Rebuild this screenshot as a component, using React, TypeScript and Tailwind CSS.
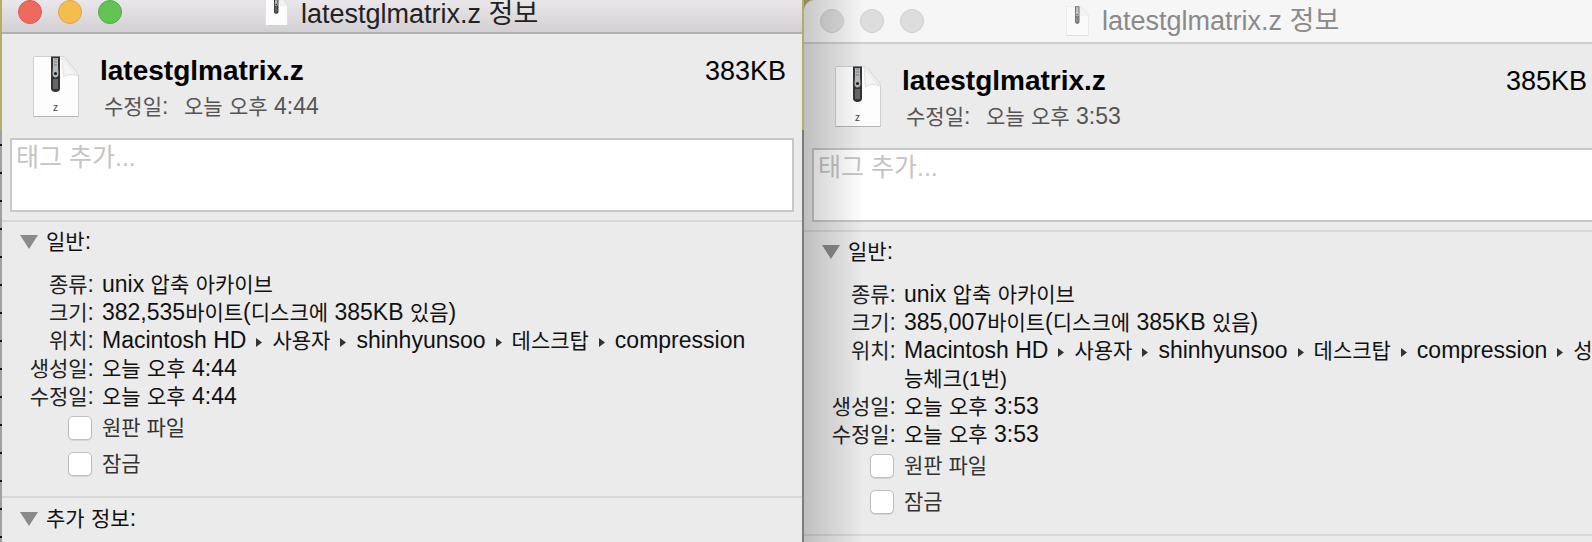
import React from "react";

const fontStack = "font-['Liberation_Sans','Noto_Sans_CJK_KR',sans-serif]";

// Latin runs sit bigger than hangul in the reference, so they get their own size
const Mixed: React.FC<{ text: string }> = ({ text }) => (
  <>
    {text.split(/([\x20-\x7e]+)/).map((part, i) =>
      i % 2 === 1 ? (
        <span key={i} className="text-[23px] leading-none">
          {part}
        </span>
      ) : (
        part
      ),
    )}
  </>
);

const ZipIcon: React.FC<{ className?: string; small?: boolean }> = ({ className, small }) => (
  <svg viewBox="0 0 46 61" className={className}>
    <path d="M1 0.5H28.5C30 0.5 31 1 32 2.2L43.5 16C45 17.8 45.5 19 45.5 21V60.5H0.5V1Z" fill="#fdfdfd" stroke="#d0d0d0" />
    <path d="M0.5 60.5H45.5" stroke="#b5b5b5" />
    <path d="M29 1.5L44.5 20C39 17.5 33 18.5 30.5 21C29.5 15 30 8 29 1.5Z" fill="#f4f4f4" stroke="#d8d8d8" strokeWidth="0.8" />
    <path d="M18 0.5H27V32.5C27 35 24.5 36 22.5 36C20.5 36 18 35 18 32.5Z" fill="#333333" />
    <path d="M20 2H25V11L25.5 18C25.5 20 24 21.5 22.5 21.5C21 21.5 19.5 20 19.5 18L20 11Z" fill="#b4babd" />
    <path d="M21 3H24M21 6H24M21 9H24" stroke="#6b6f72" strokeWidth="0.8" />
    <circle cx="22.5" cy="17.5" r="1.6" fill="#222222" />
    <path d="M20 24H25M20 26H25M20 28H25M20 30H25M20 32H25" stroke="#a8a8a8" strokeWidth="0.9" />
    {!small && (
      <text x="22.5" y="55" textAnchor="middle" fontSize="10" fill="#444" fontFamily="Liberation Sans">
        z
      </text>
    )}
  </svg>
);

const Disclosure: React.FC<{ label: string }> = ({ label }) => (
  <div className="flex items-center">
    <svg width="18" height="14" viewBox="0 0 18 14" className="ml-[18px] mr-[8px] shrink-0">
      <path d="M0 0H18L9 14Z" fill="#8a8a8a" />
    </svg>
    <span className="text-[21px] leading-[28px] text-[#111]">
      <Mixed text={label} />
    </span>
  </div>
);

const Row: React.FC<{ label: string; children: React.ReactNode }> = ({ label, children }) => (
  <div className="flex">
    <div className="w-[92px] shrink-0 text-right text-[21px] leading-[28px] text-[#222] whitespace-nowrap">
      <Mixed text={`${label}:`} />
    </div>
    <div className="ml-[8px] text-[21px] leading-[28px] text-[#111] whitespace-nowrap">{children}</div>
  </div>
);

const Check: React.FC<{ label: string }> = ({ label }) => (
  <div className="flex items-center h-[36px]">
    <div className="ml-[66px] w-[24px] h-[24px] rounded-[5px] bg-white border border-[#bdbdbd] shadow-[0_1px_1px_rgba(0,0,0,0.1)]" />
    <span className="ml-[10px] text-[21px] text-[#333]">{label}</span>
  </div>
);

const Crumb = () => (
  <svg width="6" height="9" viewBox="0 0 6 9" className="inline-block mx-[10px] align-[1px]">
    <path d="M0 0L6 4.5L0 9Z" fill="#333" />
  </svg>
);

interface WindowProps {
  active?: boolean;
  size: string;
  time: string;
  bytes: string;
  sizeInset: string;
  extra?: React.ReactNode;
  widthClass: string;
}

const InfoWindow: React.FC<WindowProps> = ({ active, size, time, bytes, sizeInset, extra, widthClass }) => {
  const lights = active
    ? ["bg-[#ee6a5f] border-[#dd5a50]", "bg-[#f5bd4f] border-[#dfa63e]", "bg-[#61c454] border-[#52ad46]"]
    : ["bg-[#dddddd] border-[#cfcfcf]", "bg-[#dddddd] border-[#cfcfcf]", "bg-[#dddddd] border-[#cfcfcf]"];

  return (
    <div className={`${widthClass} shrink-0 h-full overflow-hidden bg-[#ebebeb]`}>
      {active ? (
        <div className="h-[34px] relative flex items-start pl-[16px] bg-gradient-to-b from-[#e9e7e9] to-[#d2d0d2] border-b-2 border-[#b1b0b1] overflow-hidden">
          <div className="flex gap-[16px]">
            {lights.map((c) => (
              <div key={c} className={`w-[24px] h-[24px] rounded-full border ${c}`} />
            ))}
          </div>
          <ZipIcon small className="w-[23px] h-[30px] ml-[143px] -mt-[4px] shrink-0" />
          <span className="ml-[13px] -mt-[6px] text-[27px] leading-[40px] text-[#222] whitespace-nowrap">latestglmatrix.z 정보</span>
        </div>
      ) : (
        <div className="bg-[#b5ac6a]">
          <div className="h-[44px] flex items-center pl-[16px] bg-[#f6f6f6] border-b-2 border-[#cecece] rounded-tl-[10px]">
            <div className="flex gap-[16px]">
              {lights.map((c, i) => (
                <div key={i} className={`w-[24px] h-[24px] rounded-full border ${c}`} />
              ))}
            </div>
            <ZipIcon small className="w-[23px] h-[30px] ml-[142px] shrink-0 opacity-70" />
            <span className="ml-[13px] text-[27px] leading-[40px] text-[#8a8a8a] whitespace-nowrap">latestglmatrix.z 정보</span>
          </div>
        </div>
      )}

      <div className={`flex h-[104px] ${sizeInset}`}>
        <ZipIcon className="w-[46px] h-[61px] ml-[31px] mt-[22px] shrink-0" />
        <div className="ml-[21px] mt-[19px] flex-1 min-w-0">
          <div className="flex justify-between">
            <span className="font-bold text-[28px] leading-[36px] text-black">latestglmatrix.z</span>
            <span className="text-[27px] leading-[36px] text-black">{size}</span>
          </div>
          <div className="flex ml-[4px] mt-[3px] text-[21px] leading-[30px] text-[#555]">
            <span className="w-[80px]">
              <Mixed text="수정일:" />
            </span>
            <span>
              <Mixed text={`오늘 오후 ${time}`} />
            </span>
          </div>
        </div>
      </div>

      <div className="ml-[8px] w-[784px] h-[74px] bg-white border-2 border-[#c8c8c8] px-[4px] text-[25px] leading-[34px] text-[#c4c4c4]">
        태그 추가...
      </div>

      <div className="mt-[8px] h-[2px] bg-[#d8d8d8]" />

      <div className="mt-[6px]">
        <Disclosure label="일반:" />
      </div>

      <div className="mt-[15px] flex flex-col">
        <Row label="종류">
          <Mixed text="unix 압축 아카이브" />
        </Row>
        <Row label="크기">
          <Mixed text={`${bytes}바이트(디스크에 385KB 있음)`} />
        </Row>
        <Row label="위치">
          <Mixed text="Macintosh HD" />
          <Crumb />
          사용자
          <Crumb />
          <Mixed text="shinhyunsoo" />
          <Crumb />
          데스크탑
          <Crumb />
          <Mixed text="compression" />
          {extra}
        </Row>
        <Row label="생성일">
          <Mixed text={`오늘 오후 ${time}`} />
        </Row>
        <Row label="수정일">
          <Mixed text={`오늘 오후 ${time}`} />
        </Row>
      </div>

      <div className="-mt-[1px] flex flex-col">
        <Check label="원판 파일" />
        <Check label="잠금" />
      </div>

      <div className="mt-[14px] h-[2px] bg-[#d8d8d8]" />
      {active && (
        <div className="mt-[7px]">
          <Disclosure label="추가 정보:" />
        </div>
      )}
    </div>
  );
};

export default function App() {
  return (
    <div className={`flex w-[1592px] h-[542px] overflow-hidden bg-[#ebebeb] ${fontStack}`}>
      <div className="w-[2px] shrink-0 bg-[#a0a0a0] bg-[linear-gradient(180deg,#b5ac6a_0,#b5ac6a_130px,transparent_130px),repeating-linear-gradient(180deg,transparent_0,transparent_4px,#111_4px,#111_6px,transparent_6px,transparent_28px)]" />
      <InfoWindow active size="383KB" time="4:44" bytes="382,535" sizeInset="pr-[16px]" widthClass="w-[800px]" />
      <div className="w-[2px] shrink-0 bg-[#7d7d7d] bg-[linear-gradient(180deg,#b5ac6a_0,#b5ac6a_130px,transparent_130px)]" />
      <div className="relative flex-1 min-w-0 overflow-hidden">
        <InfoWindow
          size="385KB"
          time="3:53"
          bytes="385,007"
          sizeInset="pr-[5px]"
          widthClass="w-[788px]"
          extra={
            <>
              <Crumb />성
              <br />
              능체크(1번)
            </>
          }
        />
        <div className="absolute left-0 top-0 bottom-0 w-[60px] bg-gradient-to-r from-[#00000030] to-transparent pointer-events-none" />
      </div>
    </div>
  );
}
